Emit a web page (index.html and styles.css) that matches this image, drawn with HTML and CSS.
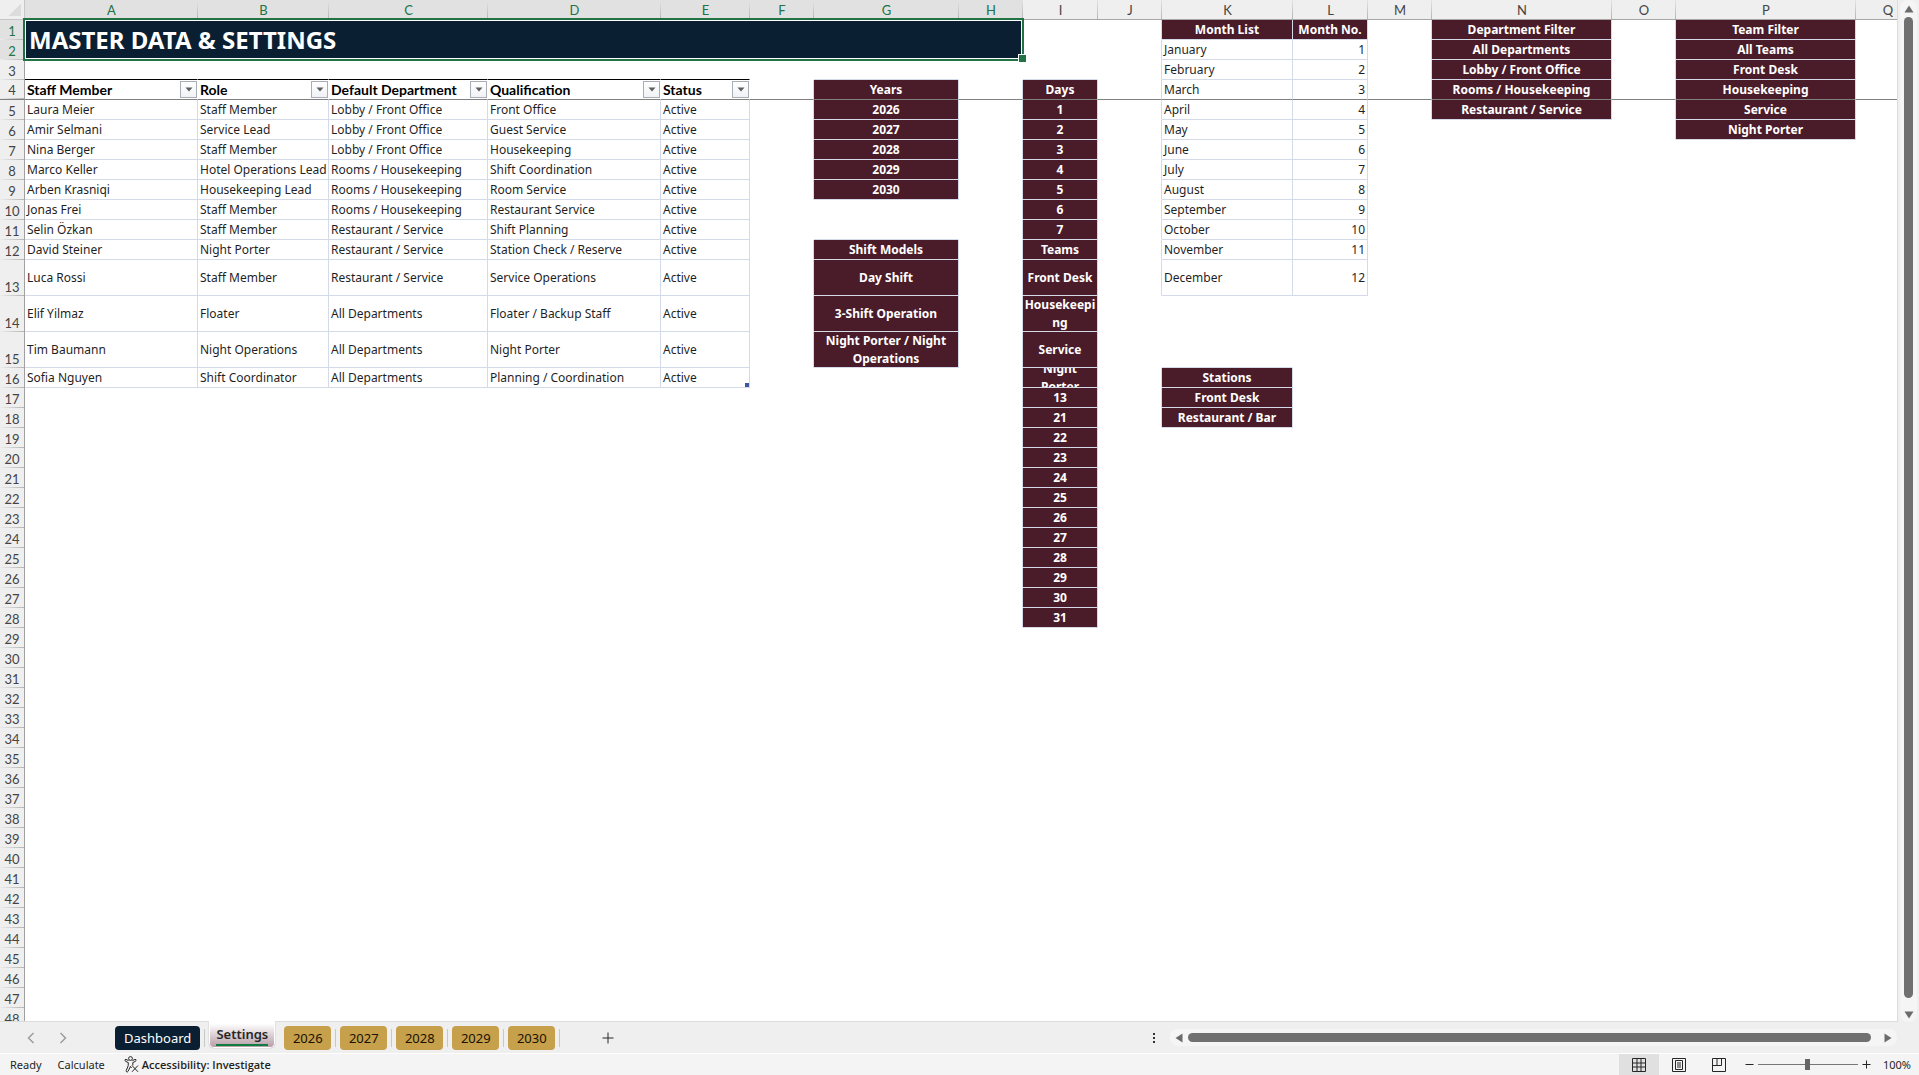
FILE: index.html
```html
<!DOCTYPE html>
<html lang="en">
<head>
    <meta charset="UTF-8">
    <meta name="viewport" content="width=device-width, initial-scale=1.0">
    <title>Master Data &amp; Settings</title>
    <link rel="stylesheet" href="styles.css">
</head>
<body>
    <main class="workspace">
        <div class="sheet">
            <table id="grid" class="grid">
                <colgroup id="cols"></colgroup>
                <thead id="gridHead"></thead>
                <tbody id="gridBody"></tbody>
            </table>
        </div>
        <div class="vscroll">
            <button class="arrow" aria-label="Scroll up"><svg width="10" height="8" viewBox="0 0 10 8"><path d="M5 0.5 L9.5 7.5 H0.5 Z"/></svg></button>
            <div class="thumb"></div>
            <button class="arrow down" aria-label="Scroll down"><svg width="10" height="8" viewBox="0 0 10 8"><path d="M0.5 0.5 H9.5 L5 7.5 Z"/></svg></button>
        </div>
    </main>

    <nav class="tabbar">
        <div class="tab-nav">
            <button aria-label="Previous sheet"><svg width="8" height="12" viewBox="0 0 8 12"><path d="M6.5 1 L1.5 6 L6.5 11"/></svg></button>
            <button aria-label="Next sheet"><svg width="8" height="12" viewBox="0 0 8 12"><path d="M1.5 1 L6.5 6 L1.5 11"/></svg></button>
        </div>
        <div class="tabs">
            <button class="tab navy">Dashboard</button>
            <button class="tab current"><span>Settings</span></button>
            <button class="tab gold">2026</button>
            <button class="tab gold">2027</button>
            <button class="tab gold">2028</button>
            <button class="tab gold">2029</button>
            <button class="tab gold">2030</button>
        </div>
        <button class="add" aria-label="New sheet"><svg width="12" height="12" viewBox="0 0 12 12"><path d="M6 0.5 V11.5 M0.5 6 H11.5"/></svg></button>
        <div class="splitter"><i></i><i></i><i></i></div>
        <div class="hscroll">
            <button class="arrow" aria-label="Scroll left"><svg width="8" height="10" viewBox="0 0 8 10"><path d="M0.5 5 L7.5 0.5 V9.5 Z"/></svg></button>
            <div class="thumb"></div>
            <button class="arrow right" aria-label="Scroll right"><svg width="8" height="10" viewBox="0 0 8 10"><path d="M7.5 5 L0.5 0.5 V9.5 Z"/></svg></button>
        </div>
    </nav>

    <footer class="status">
        <span>Ready</span>
        <span>Calculate</span>
        <button class="access">
            <svg width="15" height="17" viewBox="0 0 15 17"><circle cx="6.5" cy="2.5" r="1.9"/><path d="M4.6 4.6 L2 3.4 Q0.7 3.4 0.9 4.6 Q1.1 5.3 4.3 6.6 L4.2 9.8 L2.2 14.6 Q2 16 3.3 16 Q4 15.8 4.8 13.8 L6.5 10.4 L7.6 12 M8.4 4.6 L11 3.4 Q12.4 3.4 12.1 4.6 Q11.9 5.3 8.8 6.6 V9.4 M8 9.5 L14 15.8 M14 9.5 L8 15.8"/></svg>
            Accessibility: Investigate
        </button>
        <div class="views">
            <button class="on" aria-label="Normal"><svg width="14" height="14" viewBox="0 0 14 14"><path d="M0.5 0.5 H13.5 V13.5 H0.5 Z M5 0.5 V13.5 M9 0.5 V13.5 M0.5 5 H13.5 M0.5 9 H13.5"/></svg></button>
            <button aria-label="Page layout"><svg width="14" height="14" viewBox="0 0 14 14"><path d="M0.5 0.5 H13.5 V13.5 H0.5 Z M3.5 2.5 H10.5 V11.5 H3.5 Z M5 5 H9 M5 7 H9 M5 9 H9"/></svg></button>
            <button aria-label="Page break preview"><svg width="14" height="14" viewBox="0 0 14 14"><path d="M0.5 0.5 H13.5 V13.5 H0.5 Z M0.5 7.5 H9.5 V0.5 M5 0.5 V7.5"/></svg></button>
        </div>
        <div class="zoom">
            <button aria-label="Zoom out"><svg width="9" height="9" viewBox="0 0 9 9"><path d="M0.5 4.5 H8.5"/></svg></button>
            <input type="range" min="0" max="100" value="50" aria-label="Zoom">
            <button aria-label="Zoom in"><svg width="9" height="9" viewBox="0 0 9 9"><path d="M0.5 4.5 H8.5 M4.5 0.5 V8.5"/></svg></button>
        </div>
        <span class="percent">100%</span>
    </footer>
    <script src="script.js"></script>
</body>
</html>
```
FILE: styles.css
```css
* {
    box-sizing: border-box;
}

body {
    margin: 0;
    height: 100vh;
    display: flex;
    flex-direction: column;
    overflow: hidden;
    background: #efefef;
    color: #1f1f1f;
    font-family: "Noto Sans", sans-serif;
    font-size: 12px;
}

button {
    margin: 0;
    padding: 0;
    border: none;
    background: none;
    color: inherit;
    font: inherit;
    display: flex;
    align-items: center;
    justify-content: center;
}

svg {
    display: block;
    fill: none;
    stroke: #262626;
}

/* sheet */
.workspace {
    flex: 1;
    min-height: 0;
    display: flex;
}

.sheet {
    flex: 1;
    min-width: 0;
    overflow: hidden;
    background: #fff;
    border-right: 1px solid #dcdcdc;
    border-bottom: 1px solid #dcdcdc;
}

.grid {
    table-layout: fixed;
    width: 1920px;
    border-collapse: separate;
    border-spacing: 0;
}

.grid tr {
    height: 20px;
}

.grid tr.tall {
    height: 36px;
}

.grid th,
.grid td {
    padding: 0 2px;
    line-height: 18px;
    text-align: left;
    vertical-align: middle;
    white-space: nowrap;
    border-right: 1px solid transparent;
    border-bottom: 1px solid transparent;
}

.grid .col,
.grid .row,
.grid .corner {
    font-family: Lato, sans-serif;
    font-size: 13px;
    font-weight: normal;
    text-align: center;
    color: #444;
    background-color: #efefef;
    background-repeat: no-repeat;
}

.grid .col {
    padding-top: 1px;
    border-right: none;
    border-bottom-color: #a6a6a6;
    background-image: linear-gradient(#e4e4e4, #b4b4b4);
    background-size: 1px 100%;
    background-position: right top;
}

.grid .row {
    padding: 0;
    vertical-align: bottom;
    border-right-color: #a0a0a0;
    border-bottom: none;
    background-image: linear-gradient(to right, #ececec, #b4b4b4);
    background-size: 100% 1px;
    background-position: left bottom;
}

.grid .corner {
    border-right-color: #c6c6c6;
    border-bottom-color: #c6c6c6;
    background-image: linear-gradient(135deg, transparent 50%, #dcdcdc 50%);
    background-size: 12px 12px;
    background-position: 9px 4px;
}

.grid .picked {
    color: #217346;
    background-color: #e1e1e1;
}

.grid td.right-line {
    border-right-color: #d5dae8;
}

.grid td.bottom-line {
    border-bottom-color: #d5dae8;
}

.grid td.top-rule {
    border-bottom-color: #000;
}

.grid tr.frozen td,
.grid tr.frozen .row {
    border-bottom: 1px solid #808080;
}

.grid .fill {
    padding: 0;
    background: #4a1c2a;
    background-clip: padding-box;
    color: #fff;
    font-weight: bold;
    text-align: center;
    white-space: normal;
    word-break: break-word;
}

/* text taller than its row is cut off */
.fill div {
    display: flex;
    align-items: center;
    justify-content: center;
    height: 19px;
    overflow: hidden;
}

.tall .fill div {
    height: 35px;
}

.grid .number {
    text-align: right;
}

.grid .field {
    padding-right: 0;
    color: #000;
    font-family: Lato, sans-serif;
    font-size: 14px;
    font-weight: bold;
}

.field div {
    display: flex;
    align-items: center;
    justify-content: space-between;
}

.filter {
    width: 17px;
    height: 17px;
    border: 1px solid #a9adb5;
    background: linear-gradient(#fff, #f0f2f6);
}

.filter svg {
    fill: #5f5f5f;
    stroke: none;
}

.grid .table-end {
    background: linear-gradient(#3f56a6, #3f56a6) no-repeat right bottom / 4px 4px;
}

.grid .title {
    position: relative;
    padding: 0 4px;
    background: #0b1f33;
    color: #fff;
    font-size: 24px;
    font-weight: bold;
    line-height: 36px;
}

.title::before {
    content: "";
    position: absolute;
    inset: -2px;
    border: 2px solid #217346;
    box-shadow: inset 0 0 0 1px #fff;
}

.title::after {
    content: "";
    position: absolute;
    right: -5px;
    bottom: -4px;
    width: 7px;
    height: 7px;
    background: #217346;
    border: 1px solid #fff;
}

/* scrollbars */
.vscroll {
    width: 17px;
    margin: 0 2px;
    padding: 5px 0 3px;
    display: flex;
    flex-direction: column;
    align-items: center;
    gap: 4px;
    background: #f5f5f5;
    border-radius: 8px;
}

.thumb {
    flex: 1;
    background: #707070;
    border-radius: 5px;
}

.vscroll .thumb {
    width: 9px;
}

.vscroll .down {
    margin-top: 9px;
}

.arrow svg {
    fill: #6b6b6b;
    stroke: none;
}

.hscroll {
    flex: 0 1 727px;
    height: 17px;
    padding: 0 5px;
    display: flex;
    align-items: center;
    gap: 5px;
    background: #f5f5f5;
    border-radius: 8px;
}

.hscroll .thumb {
    height: 9px;
}

.hscroll .right {
    margin-left: 8px;
}

/* sheet tabs */
.tabbar {
    height: 31px;
    padding-right: 22px;
    display: flex;
    align-items: center;
    font-size: 13px;
}

.tab-nav {
    width: 115px;
    padding-left: 27px;
    display: flex;
    gap: 24px;
}

.tab-nav svg {
    stroke: #9a9a9a;
    stroke-width: 1.4;
}

.tabs {
    align-self: stretch;
    display: flex;
    align-items: center;
}

.tab {
    position: relative;
    height: 24px;
    padding: 0 8px;
    border-radius: 4px;
    color: #1a1205;
}

.navy {
    padding: 0 9px;
    background: #0b1f33;
    color: #fff;
}

.gold {
    width: 47px;
    margin: 0 5px 0 4px;
    background: #c6a04a;
}

.navy::after,
.gold::after {
    content: "";
    position: absolute;
    right: -5px;
    top: 3px;
    height: 18px;
    border-right: 1px solid #c8c8c8;
}

.current {
    align-self: flex-start;
    width: 68px;
    height: 28px;
    margin: -1px 4px 0 8px;
    border: 1px solid #e2e2e2;
    border-top: none;
    border-radius: 0 0 6px 6px;
    box-shadow: inset 0 0 0 1px #fff;
    background: linear-gradient(#fff 10%, #b49aa4);
    color: #262626;
    font-weight: 600;
}

.current span {
    line-height: 20px;
    border-bottom: 2px solid #107c41;
}

.add {
    margin-left: 42px;
}

.splitter {
    margin-left: auto;
    margin-right: 15px;
    display: flex;
    flex-direction: column;
    gap: 2px;
}

.splitter i {
    width: 2px;
    height: 2px;
    background: #333;
}

/* status bar */
.status {
    height: 22px;
    padding: 0 8px 0 10px;
    display: flex;
    align-items: center;
    gap: 16px;
    border-top: 1px solid #fff;
    background: #f4f4f4;
    font-size: 11px;
}

.access {
    gap: 3px;
    margin-left: 3px;
    font-family: "Open Sans", sans-serif;
    font-weight: 600;
}

.views {
    align-self: stretch;
    display: flex;
    margin-left: auto;
}

.views button {
    width: 40px;
}

.views .on {
    background: #e0e0e0;
}

.zoom {
    display: flex;
    align-items: center;
    gap: 4px;
    margin-left: -10px;
}

.zoom input {
    appearance: none;
    width: 100px;
    height: 12px;
    margin: 0;
    background: linear-gradient(#777, #777) no-repeat center / 100% 1px;
}

.zoom input::-webkit-slider-thumb {
    appearance: none;
    width: 5px;
    height: 11px;
    background: #666;
}

.percent {
    margin-left: -4px;
}
```
FILE: script.js
```js
const widths = [25, 173, 131, 159, 173, 89, 64, 145, 64, 75, 64, 131, 75, 64, 180, 64, 180, 64];
const letters = 'ABCDEFGHIJKLMNOPQ';
const rowCount = 48;
const tallRows = [13, 14, 15];
const cells = {};

function put(col, row, values, type) {
    values.forEach((text, i) => {
        cells[col + (row + i)] = { text, type };
    });
}

const staff = [
    ['Laura Meier', 'Staff Member', 'Lobby / Front Office', 'Front Office', 'Active'],
    ['Amir Selmani', 'Service Lead', 'Lobby / Front Office', 'Guest Service', 'Active'],
    ['Nina Berger', 'Staff Member', 'Lobby / Front Office', 'Housekeeping', 'Active'],
    ['Marco Keller', 'Hotel Operations Lead', 'Rooms / Housekeeping', 'Shift Coordination', 'Active'],
    ['Arben Krasniqi', 'Housekeeping Lead', 'Rooms / Housekeeping', 'Room Service', 'Active'],
    ['Jonas Frei', 'Staff Member', 'Rooms / Housekeeping', 'Restaurant Service', 'Active'],
    ['Selin Özkan', 'Staff Member', 'Restaurant / Service', 'Shift Planning', 'Active'],
    ['David Steiner', 'Night Porter', 'Restaurant / Service', 'Station Check / Reserve', 'Active'],
    ['Luca Rossi', 'Staff Member', 'Restaurant / Service', 'Service Operations', 'Active'],
    ['Elif Yilmaz', 'Floater', 'All Departments', 'Floater / Backup Staff', 'Active'],
    ['Tim Baumann', 'Night Operations', 'All Departments', 'Night Porter', 'Active'],
    ['Sofia Nguyen', 'Shift Coordinator', 'All Departments', 'Planning / Coordination', 'Active']
];

['Staff Member', 'Role', 'Default Department', 'Qualification', 'Status'].forEach((name, i) => {
    put(letters[i], 4, [name], 'field');
    put(letters[i], 5, staff.map(person => person[i]), 'plain');
});

put('G', 4, ['Years', '2026', '2027', '2028', '2029', '2030'], 'fill');
put('G', 12, ['Shift Models', 'Day Shift', '3-Shift Operation', 'Night Porter / Night Operations'], 'fill');
put('I', 4, ['Days', '1', '2', '3', '4', '5', '6', '7', 'Teams', 'Front Desk', 'Housekeeping', 'Service',
    'Night Porter', '13', '21', '22', '23', '24', '25', '26', '27', '28', '29', '30', '31'], 'fill');
put('K', 1, ['Month List'], 'fill');
put('K', 2, ['January', 'February', 'March', 'April', 'May', 'June', 'July', 'August',
    'September', 'October', 'November', 'December'], 'plain');
put('K', 16, ['Stations', 'Front Desk', 'Restaurant / Bar'], 'fill');
put('L', 1, ['Month No.'], 'fill');
put('L', 2, ['1', '2', '3', '4', '5', '6', '7', '8', '9', '10', '11', '12'], 'number');
put('N', 1, ['Department Filter', 'All Departments', 'Lobby / Front Office', 'Rooms / Housekeeping', 'Restaurant / Service'], 'fill');
put('P', 1, ['Team Filter', 'All Teams', 'Front Desk', 'Housekeeping', 'Service', 'Night Porter'], 'fill');

function lined(i, row) {
    const cell = cells[letters[i] + row];
    return Boolean(cell) && cell.type !== 'field';
}

function makeCell(i, row) {
    const td = document.createElement('td');
    const cell = cells[letters[i] + row];
    if (lined(i, row) || lined(i + 1, row)) td.classList.add('right-line');
    if (lined(i, row) || lined(i, row + 1)) td.classList.add('bottom-line');
    if (row === 3 && i < 5) td.classList.add('top-rule');
    if (!cell) return td;

    td.classList.add(cell.type);
    if (cell.type === 'field') {
        td.innerHTML = `<div><span>${cell.text}</span><button class="filter" aria-label="Filter ${cell.text}">
            <svg width="8" height="5" viewBox="0 0 8 5"><path d="M0.5 0.5 H7.5 L4 4.5 Z"/></svg></button></div>`;
    } else if (cell.type === 'fill') {
        td.innerHTML = `<div>${cell.text}</div>`;
    } else {
        td.textContent = cell.text;
    }
    if (letters[i] + row === 'E16') td.classList.add('table-end');
    return td;
}

document.getElementById('cols').innerHTML = widths.map(w => `<col style="width: ${w}px">`).join('');

let head = '<tr><th class="corner"></th>';
for (let i = 0; i < letters.length; i++) {
    head += `<th class="col${i < 8 ? ' picked' : ''}">${letters[i]}</th>`;
}
document.getElementById('gridHead').innerHTML = head + '</tr>';

const body = document.getElementById('gridBody');
for (let row = 1; row <= rowCount; row++) {
    const tr = document.createElement('tr');
    if (tallRows.includes(row)) tr.className = 'tall';
    if (row === 4) tr.className = 'frozen';
    tr.innerHTML = `<th class="row${row < 3 ? ' picked' : ''}">${row}</th>`;
    if (row === 1) {
        tr.innerHTML += '<td class="title" colspan="8" rowspan="2">MASTER DATA &amp; SETTINGS</td>';
    }
    for (let i = row < 3 ? 8 : 0; i < letters.length; i++) {
        tr.appendChild(makeCell(i, row));
    }
    body.appendChild(tr);
}
```
